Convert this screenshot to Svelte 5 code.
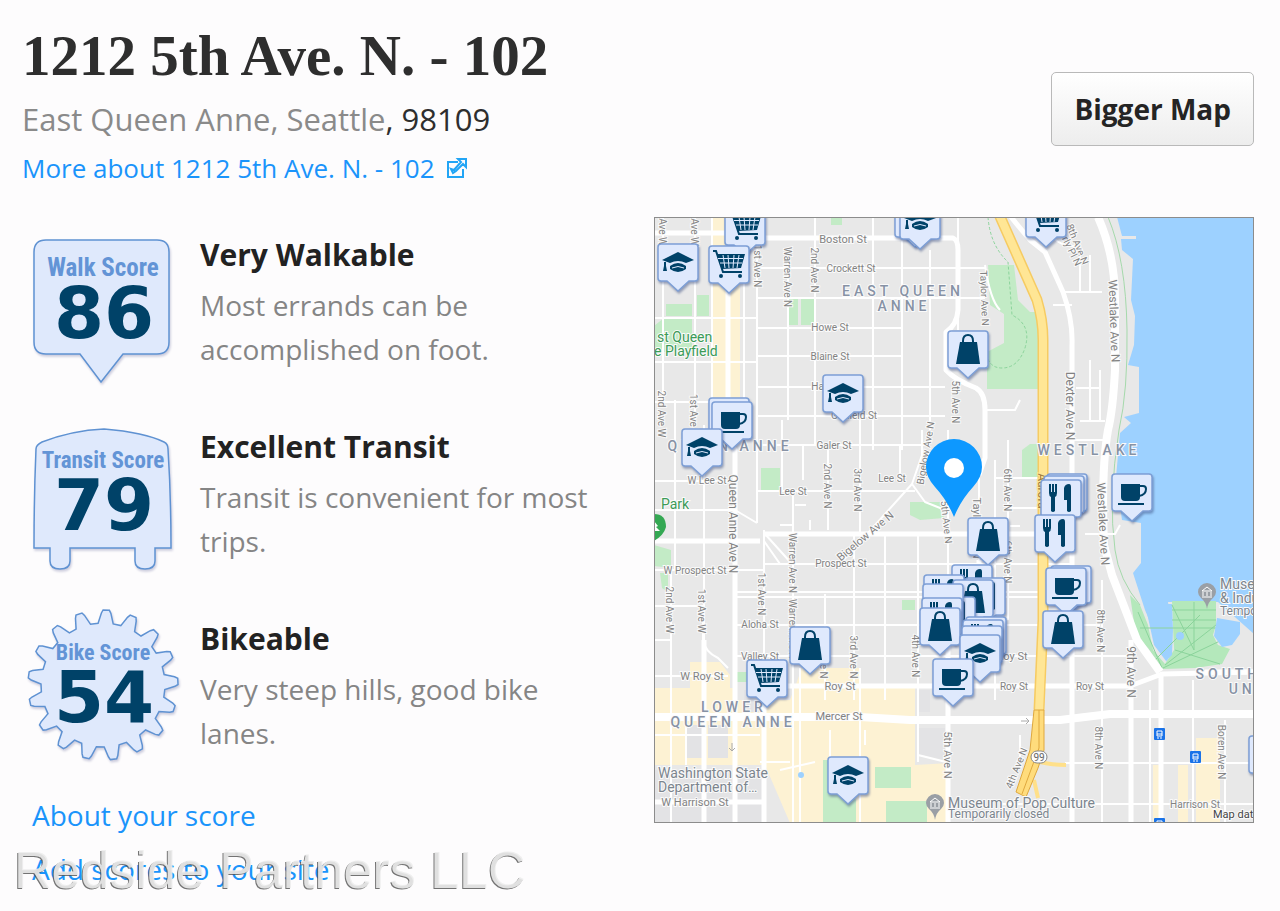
<script lang="ts">
	type Kind = 'grad' | 'cart' | 'bag' | 'cup' | 'food' | 'none';
	type Label = [text: string, x: number, y: number, size?: number, angle?: number];

	// back to front, x is the tip of the pin and y the top of its box
	const places: [Kind, number, number][] = [
		['cart', 745, 208],
		['cart', 729, 246],
		['grad', 678, 244],
		['grad', 915, 200],
		['grad', 920, 202],
		['cart', 1046, 200],
		['bag', 968, 331],
		['grad', 843, 375],
		['none', 729, 398],
		['cup', 732, 402],
		['grad', 702, 429],
		['cup', 1132, 474],
		['none', 1067, 474],
		['food', 1064, 476],
		['food', 1061, 480],
		['food', 1055, 515],
		['bag', 988, 518],
		['cup', 1071, 566],
		['cup', 1066, 568],
		['bag', 1063, 611],
		['food', 972, 565],
		['food', 944, 575],
		['food', 985, 578],
		['bag', 973, 580],
		['food', 955, 597],
		['none', 943, 584],
		['food', 942, 598],
		['bag', 940, 608],
		['food', 986, 617],
		['food', 983, 620],
		['none', 982, 626],
		['grad', 980, 635],
		['cup', 953, 659],
		['bag', 810, 627],
		['cart', 767, 660],
		['grad', 848, 757],
		['none', 1269, 736]
	];

	const streets: Label[] = [
		['Boston St', 843, 243, 11],
		['Crockett St', 851, 272, 10],
		['Howe St', 830, 331, 10],
		['Blaine St', 830, 360, 10],
		['Hayes St', 831, 390, 10],
		['Garfield St', 854, 419, 10],
		['Galer St', 834, 449, 10],
		['W Lee St', 707, 484, 10],
		['Lee St', 793, 495, 10],
		['Lee St', 892, 482, 10],
		['W Prospect St', 695, 574, 10],
		['Prospect St', 841, 567, 10],
		['Aloha St', 760, 628, 10],
		['Valley St', 760, 660, 10],
		['W Roy St', 702, 680, 11],
		['Roy St', 840, 690, 11],
		['Roy St', 1012, 660, 11],
		['Roy St', 1014, 690, 10],
		['Roy St', 1090, 690, 10],
		['Mercer St', 839, 720, 11],
		['W Harrison St', 695, 806, 11],
		['Harrison St', 1195, 808, 10],
		['Ave W', 663, 232, 10, 90],
		['Ave W', 695, 232, 10, 90],
		['1st Ave N', 758, 266, 10, 90],
		['Warren Ave N', 788, 277, 10, 90],
		['2nd Ave N', 815, 270, 10, 90],
		['2nd Ave W', 662, 414, 10, 90],
		['1st Ave W', 694, 416, 10, 90],
		['Queen Anne Ave N', 733, 524, 12, 90],
		['2nd Ave N', 828, 486, 10, 90],
		['3rd Ave N', 858, 490, 10, 90],
		['Warren Ave N', 793, 563, 10, 90],
		['Warren Ave N', 793, 629, 10, 90],
		['1st Ave N', 762, 594, 10, 90],
		['2nd Ave W', 670, 610, 10, 90],
		['1st Ave W', 702, 611, 10, 90],
		['2nd Ave N', 824, 656, 10, 90],
		['3rd Ave N', 854, 657, 10, 90],
		['4th Ave N', 916, 656, 10, 90],
		['Taylor Ave N', 985, 298, 10, 88],
		['5th Ave N', 956, 402, 10, 90],
		['Taylor Ave N', 977, 528, 11, 90],
		['5th Ave N', 947, 522, 10, 84],
		['6th Ave N', 1008, 490, 10, 90],
		['6th Ave N', 1008, 562, 10, 90],
		['5th Ave N', 948, 755, 11, 90],
		['8th Ave N', 1078, 244, 10, 68],
		['Waverly Pl N', 1067, 240, 10, 64],
		['Westlake Ave N', 1114, 321, 12, 88],
		['Dexter Ave N', 1070, 406, 12, 90],
		['Westlake Ave N', 1103, 524, 12, 87],
		['8th Ave N', 1101, 631, 10, 90],
		['9th Ave N', 1131, 672, 12, 90],
		['8th Ave N', 1099, 748, 10, 90],
		['Boren Ave N', 1222, 752, 10, 90],
		['4th Ave N', 1016, 768, 10, -68],
		['Bigelow Ave N', 865, 536, 11, -40],
		['Bigelow Ave N', 925, 453, 10, -80]
	];

	const areas: Label[] = [
		['EAST QUEEN', 903, 296],
		['ANNE', 904, 311],
		['QUEEN ANNE', 730, 451],
		['WESTLAKE', 1089, 455],
		['LOWER', 734, 712],
		['QUEEN ANNE', 733, 727],
		['SOUTH LAKE', 1257, 679],
		['UNION', 1260, 694]
	];

	const scores = [
		{ id: 'walk', name: 'Walk Score', value: 86, title: 'Very Walkable', text: 'Most errands can be accomplished on foot.' },
		{ id: 'transit', name: 'Transit Score', value: 79, title: 'Excellent Transit', text: 'Transit is convenient for most trips.' },
		{ id: 'bike', name: 'Bike Score', value: 54, title: 'Bikeable', text: 'Very steep hills, good bike lanes.' }
	];

	function gear(cx: number, cy: number, teeth: number) {
		const points: string[] = [];
		for (let i = 0; i < teeth; i++) {
			for (const [offset, r] of [[-7, 62], [-3.8, 72], [-2.4, 75], [2.4, 75], [3.8, 72], [7, 62]]) {
				const a = ((i * 360) / teeth + offset + 2.5 - 90) * (Math.PI / 180);
				points.push(`${(cx + r * Math.cos(a)).toFixed(1)},${(cy + r * Math.sin(a)).toFixed(1)}`);
			}
		}
		return `M${points.join('L')}Z`;
	}

	const shapes: Record<string, string> = {
		walk: 'M24 16H135Q147 16 147 28V118Q147 130 135 130H101L79 158L58 130H24Q12 130 12 118V28Q12 16 24 16Z',
		transit:
			'M82 13C106 15 130 20 142 26Q146 28 146 33Q149 80 149 132H133V145Q133 153 123 153Q113 153 113 145V132H48V145Q48 153 38 153Q28 153 28 145V132H12Q12 80 14 33Q14 29 20 26C38 19 60 14 82 13Z',
		bike: gear(81, 77, 17)
	};
</script>

{#snippet icon(kind: Kind)}
	{#if kind === 'grad'}
		<path d="M-16 16L0 8L16 16L8 19Q0 15-8 19Z" />
		<path d="M-8 22Q0 16 8 22V25Q0 31-8 25Z" />
		<path class="light" d="M-6 24Q0 21 6 24" />
		<path d="M-14 18H-12V22L-11 27H-15L-14 22Z" />
	{:else if kind === 'cart'}
		<path class="line" d="M-16 5H-13L-6 26H13" />
		<path d="M-12 8H16L12 22L-7 23Z" />
		<path class="light" d="M-11 12.500H14M-9 17H13M-6 9L-4 22M-1 9L0 22M5 9L4 22M10 9L8 22" />
		<circle cx="-8" cy="30" r="2" />
		<circle cx="11" cy="30" r="2" />
	{:else if kind === 'bag'}
		<path d="M-8 11H9L12 33H-12Z" />
		<path class="line" d="M-5 13V10Q-5 4 0 4T5 10V13" />
	{:else if kind === 'cup'}
		<path d="M-11 10H8V23Q8 27 4 27H-7Q-11 27-11 23Z" />
		<path class="line" d="M7 12H11Q14 12 14 15Q14 21 7 22M-14 30H12" />
	{:else if kind === 'food'}
		<path d="M-12 4H-10V12H-9V4H-7V12H-6V4H-4V13Q-4 16-6 17V31Q-8 33-10 31V17Q-12 16-12 13Z" />
		<path d="M3 8Q4 4 8 4Q10 4 10 7V31Q8 33 6 31V20H3Z" />
	{/if}
{/snippet}

<main>
	<header>
		<div>
			<h1>1212 5th Ave. N. - 102</h1>
			<p class="where">
				<a href="#neighborhood">East Queen Anne</a><span class="grey">,</span>
				<a href="#city">Seattle</a>, 98109
			</p>
			<a class="more" href="#more">
				More about 1212 5th Ave. N. - 102
				<svg viewBox="0 0 22 22" width="22" height="22" aria-hidden="true">
					<path d="M12 5H2V20H17V12" />
					<path d="M12 2H20V10L17 7L10 14L7 16L5 12L8 13L15 5Z" />
				</svg>
			</a>
		</div>
		<button type="button">Bigger Map</button>
	</header>

	<div class="columns">
		<section>
			{#each scores as score (score.id)}
				<article>
					<svg class="badge" viewBox="0 0 178 168" role="img" aria-label="{score.name} {score.value}">
						<path d={shapes[score.id]} />
						<text class="name {score.id}" x="81" y="52">{score.name}</text>
						<text class="value" x="82" y="114">{score.value}</text>
					</svg>
					<div class="text">
						<h2>{score.title}</h2>
						<p>{score.text}</p>
					</div>
				</article>
			{/each}
			<ul>
				<li><a href="#about">About your score</a></li>
				<li><a href="#add">Add scores to your site</a></li>
			</ul>
		</section>

		<svg class="map" viewBox="654 217 600 606" role="img" aria-label="Map of places near 1212 5th Ave. N.">
			<rect class="land" x="654" y="217" width="600" height="606" />

			<g class="sand">
				<path d="M713 217H740V400H713Z" />
				<path d="M654 688H735V700H790L802 668H860V686H915V765L950 763V823H790L765 765H654Z" />
				<path d="M690 662H720L730 675V700H690Z" />
				<path d="M1178 765H1188V823H1178ZM1196 738H1220V823H1196ZM1153 765H1163V823H1153Z" />
			</g>
			<g class="blocks">
				<path d="M686 725H702V758H686ZM708 725H728V758H708ZM744 690H764V712H744ZM654 770H766V823H654ZM918 690H930V712H918ZM918 728H945V760L918 754Z" />
			</g>
			<g class="green">
				<path d="M666 304H692V316H666ZM697 295H709V316H697ZM654 326L664 318H692V352H654Z" />
				<path d="M789 299H798V325H789ZM801 299H814V325H801ZM831 217H842V225H831Z" />
				<path d="M988 265H1014L1018 300L1030 312H1039V389H987V352L1004 343V314L990 305Z" />
				<path d="M761 468H780V490H761ZM654 545L671 550V568L654 566ZM660 573H668V592L662 588Z" />
				<path d="M1022 450L1030 444H1038V477H1022ZM910 502H940L944 518L920 520L910 515ZM902 600H915V610H902Z" />
				<path d="M823 760H830L856 800V823H823ZM875 767H911V788H875ZM886 801H927V823H886ZM735 672H747V682H735Z" />
			</g>

			<path class="water" d="M1117 217L1122 236H1136V239H1121L1122 250L1133 259L1131 300L1135 316L1134 345L1128 365L1139 367V413L1124 417L1131 423L1120 433L1116 477L1122 520L1141 523V563L1133 573L1145 610L1167 662L1172 632L1168 602H1218L1254 634V217Z" />
			<path class="park" d="M1130 595L1140 605L1148 625L1153 650L1165 664L1174 650L1172 601H1216V625L1213 635L1218 645L1230 649L1222 664L1195 668L1163 669L1148 648L1136 636Z" />
			<path class="water" d="M1145 604H1172L1173 630L1172 655L1166 661L1154 645Z" />
			<path class="trail" d="M1172 610H1216M1172 620H1216M1140 628H1216M1150 665L1200 615M1163 668L1222 640M1175 650L1220 664M1194 602V650L1172 605M1216 625L1165 665M1138 612Q1150 640 1162 668" />
			<path class="water" d="M1217 618L1240 622L1240 634L1232 645L1222 647L1214 636Z" />
			<circle class="water" cx="1180" cy="636" r="4" />
			<path class="trail thin" d="M1108 217Q1126 260 1127 330Q1128 390 1119 430Q1108 500 1115 550Q1119 580 1140 605" />
			<path class="trail dash" d="M988 217Q990 245 1008 262L1012 315Q1032 325 1025 348Q1018 368 1002 368Q990 368 987 356" />

			<g class="roads">
				<path d="M654 318H757M654 362H757M654 402H714M654 481H735M654 510H735L757 523M654 570H765M654 606H703V640Q705 652 718 658L728 668M654 640H670M654 676H728" />
				<path d="M663 217V400M675 400V570M671 570V823M695 217V425M704 425V823M712 217V440M744 217V440" />
				<path d="M757 268H985M757 298H985M757 328H902M757 356H902M757 387H945M757 416H945M757 445H930M757 491H915M765 564H1040M735 592H1040M735 597H1040M735 625H1100M735 656H1130" />
				<path d="M757 217V523M788 250V420M782 420V490M815 217V445M803 445V480M793 490V823M828 448V530M873 217V450M902 217V450M930 250V430M860 410V535M900 445V480M764 530V823M825 594V700M854 534V700M885 534V700M918 534V762M948 430V600M995 460V700M1008 440V620M979 470V600" />
				<path d="M764 541L780 564M765 534L792 564M780 525H792M795 505H806M810 520V530M840 564L912 484L922 455V430M912 484L925 502L945 510M958 217V330M985 265Q990 300 1000 310M985 410H1015L1020 400M995 478H1040M1010 508H1040M1010 526H1020" />
				<path d="M1072 305H1053M1045 228Q1060 250 1078 245M1063 292H1102M1080 245V292M1090 255V292M1090 360V420M1100 370V420M1076 388H1100M1080 421H1105M1085 534H1115L1120 525" />
				<path d="M1040 564H1072M1102 580V823M1132 690V823M1193 680V823M1225 720V823M1065 763H1254M1000 804H1254M1040 656H1072V625M1020 735V760M760 762H790M830 730V762M865 730V745M815 762L780 770" />
				<path d="M654 735H760M686 720V765M918 720L918 755L950 763M800 668V823M860 668V823M1150 690V823M1072 440H1105" />
			</g>
			<g class="roads mid">
				<path d="M654 233H735M654 541H760M764 534H1040M765 686H1130L1162 674L1254 672M654 802H766M728 217V440L735 450V823M704 640V823M1072 620V823M1161 675V823M1131 640V823" />
				<path d="M735 238H953Q958 240 958 250V310Q957 325 946 332V370Q955 380 976 388Q985 393 985 410V458L979 475" />
				<path d="M1011 217L1030 240L1045 252L1063 292Q1073 320 1072 345V470V620M948 600V823M979 560V600M764 700V823M1205 672H1254M1088 217" />
			</g>
			<path class="roads big" d="M654 717H860L910 720H1060L1110 714H1254M1098 217Q1115 255 1115 300V370Q1113 410 1108 430Q1101 470 1104 545L1112 575L1137 640L1160 672" />

			<g class="highway">
				<path class="edge" d="M998 212L1037 300Q1043 320 1043 340V620L1039 710" />
				<path d="M998 212L1037 300Q1043 320 1043 340V620L1039 712" />
			</g>
			<path class="ramp spur" d="M1040 762Q1052 765 1066 765M1034 780L1038 798" />
			<path class="ramp" d="M1034 710H1044L1044 750L1038 768L1026 797L1016 792L1030 750Z" />
			<path class="ramp open" d="M1039 710V748L1022 794" />

			<g class="streets">
				{#each streets as [text, x, y, size, angle]}
					<text font-size={size} transform="translate({x} {y}) rotate({angle ?? 0})" dy={angle ? 4 : 0}>{text}</text>
				{/each}
				<text class="aurora" font-size="12" transform="translate(1042 491) rotate(90)" dy="4">Aurora</text>
			</g>
			<g class="areas">
				{#each areas as [text, x, y]}
					<text {x} {y}>{text}</text>
				{/each}
			</g>
			<g class="parks">
				<text x="657" y="342">st Queen</text>
				<text x="654" y="356">e Playfield</text>
				<text x="661" y="509">Park</text>
			</g>
			<g class="spots">
				<text x="658" y="778">Washington State</text>
				<text x="658" y="792">Department of…</text>
				<text x="948" y="808">Museum of Pop Culture</text>
				<text class="sub" x="948" y="818">Temporarily closed</text>
				<text x="1220" y="589">Museum</text>
				<text x="1220" y="603">&amp; Industry</text>
				<text class="sub" x="1220" y="615">Temporarily</text>
				<text class="credit" x="1213" y="818">Map data</text>
			</g>

			<path class="tree" d="M654 514Q666 514 666 527Q664 535 654 541Z" />
			<path class="leaf" d="M654 521L658 526L656 527L660 531H654Z" />
			{#each [[935, 803], [1207, 592]] as [x, y]}
				<g class="museum" transform="translate({x} {y})">
					<path d="M0 17Q-1 10-6 6Q-9 3-9 0A9 9 0 0 1 9 0Q9 3 6 6Q1 10 0 17Z" />
					<path class="temple" d="M-5-1L0-5L5-1ZM-4 0V4M0 0V4M4 0V4M-5 5H5" />
				</g>
			{/each}
			{#each [[1159, 734], [1195, 757], [1159, 824]] as [x, y]}
				<g class="stop" transform="translate({x} {y})">
					<rect x="-5" y="-6" width="11" height="12" rx="1" />
					<path d="M-2-3H3V2H-2ZM-2 0H3M-2 4H0M1 4H3" />
				</g>
			{/each}
			<g class="shield">
				<rect x="1031" y="751" width="16" height="12" rx="6" />
				<text x="1039" y="761">99</text>
			</g>
			<path class="arrow" d="M1021 721H1029M1026 718L1029 721L1026 724M732 743V751M729 748L732 751L735 748" />
			<circle class="water" cx="801" cy="775" r="3" />

			{#each places as [kind, x, y]}
				<g class="place" transform="translate({x} {y})">
					<path class="box" d="M-17 0H17Q20 0 20 3V34Q20 37 17 37H11L0 47L-11 37H-17Q-20 37-20 34V3Q-20 0-17 0Z" />
					{@render icon(kind)}
				</g>
			{/each}

			<path class="home" d="M954 517Q947 500 935 487Q926 477 926 467A28 28 0 0 1 982 467Q982 477 973 487Q961 500 954 517Z" />
			<circle class="dot" cx="954" cy="468" r="10" />
			<rect class="frame" x="654" y="217" width="600" height="606" />
		</svg>
	</div>

	<div class="watermark">Redside Partners LLC</div>
</main>

<style>
	:global(body) {
		margin: 0;
		background: #fdfcfd;
	}
	main {
		position: relative;
		padding: 24px 26px 0 22px;
		font-family: 'Open Sans', 'Noto Sans', sans-serif;
		color: #2e2e2e;
	}
	a {
		color: #1a94fb;
		text-decoration: none;
	}
	h1,
	h2,
	p,
	ul {
		margin: 0;
		padding: 0;
	}
	header {
		display: flex;
		justify-content: space-between;
		align-items: flex-start;
		min-height: 193px;
	}
	h1 {
		font: bold 57px/64px 'Liberation Serif', serif;
	}
	.where {
		margin-top: 6px;
		font-size: 31px;
		line-height: 50px;
	}
	.where a,
	.grey {
		color: #8a8a8a;
	}
	.more {
		display: flex;
		align-items: center;
		gap: 11px;
		font-size: 26px;
		line-height: 48px;
	}
	.more svg path {
		fill: none;
		stroke: #22a5f5;
		stroke-width: 2;
	}
	button {
		margin-top: 48px;
		padding: 0 22px;
		height: 74px;
		border: 1px solid #b9b9b9;
		border-radius: 5px;
		background: linear-gradient(#fff, #ededed);
		color: #242424;
		font: bold 28px 'Open Sans', sans-serif;
	}
	.columns {
		display: grid;
		grid-template-columns: 604fr 600fr;
		gap: 28px;
		align-items: start;
	}
	section {
		padding-top: 7px;
	}
	article {
		display: flex;
		min-height: 168px;
		margin-bottom: 24px;
	}
	article:last-of-type {
		margin-bottom: 12px;
	}
	.badge {
		flex: none;
		width: 178px;
		height: 168px;
	}
	.badge path {
		fill: #dfe9fc;
		stroke: #5f92d2;
		stroke-width: 1.500;
		filter: drop-shadow(1px 2px 1px #ccd);
	}
	.badge text {
		text-anchor: middle;
		font-weight: bold;
	}
	.name {
		fill: #6394d6;
		font-family: 'Liberation Sans Narrow', 'Roboto Condensed', Roboto, sans-serif;
	}
	.walk {
		font-size: 25px;
	}
	.transit {
		font-size: 23px;
	}
	.bike {
		font-size: 22px;
	}
	.value {
		fill: #004268;
		font-family: 'DejaVu Sans', sans-serif;
		font-size: 72px;
	}
	.text {
		padding: 3px 30px 0 0;
	}
	h2 {
		font-size: 30px;
		font-weight: bold;
		line-height: 56px;
		color: #222;
	}
	article p {
		color: #858585;
		font-size: 28px;
		line-height: 44px;
	}
	ul {
		padding-left: 10px;
		list-style: none;
		font-size: 28px;
		line-height: 54px;
	}
	.watermark {
		position: absolute;
		left: 14px;
		bottom: -4px;
		font: 52px/60px 'Liberation Sans', sans-serif;
		color: rgba(236, 236, 236, 0.9);
		text-shadow: -1px 1px 0 rgba(80, 80, 80, 0.8);
		white-space: nowrap;
		pointer-events: none;
	}

	.map {
		display: block;
		width: 100%;
		font-family: Roboto, sans-serif;
	}
	.land {
		fill: #e8e8e8;
	}
	.blocks {
		fill: #e3e3e5;
	}
	.sand {
		fill: #fdf2d3;
	}
	.green {
		fill: #c3ebc6;
	}
	.park {
		fill: #b4e8bb;
	}
	.water {
		fill: #9dd1ff;
	}
	.trail {
		fill: none;
		stroke: #8bd49b;
	}
	.thin {
		stroke: #a5d9ab;
	}
	.dash {
		stroke-dasharray: 3 2;
	}
	.roads {
		fill: none;
		stroke: #fff;
		stroke-width: 2;
		stroke-linejoin: round;
	}
	.mid {
		stroke-width: 5;
	}
	.big {
		stroke-width: 8;
	}
	.highway path {
		fill: none;
		stroke: #ffe695;
		stroke-width: 8;
	}
	.highway .edge {
		stroke: #f6cb62;
		stroke-width: 11;
	}
	.ramp {
		fill: #ffdc7c;
		stroke: #dfa83e;
	}
	.open {
		fill: none;
	}
	.spur {
		fill: none;
		stroke: #ffe08a;
		stroke-width: 4;
	}
	.map text {
		paint-order: stroke;
		stroke: #fafafa;
		stroke-width: 2;
	}
	.streets text {
		text-anchor: middle;
		fill: #828282;
	}
	.streets .aurora {
		fill: #a07a3c;
		stroke: #ffe695;
	}
	.areas text {
		text-anchor: middle;
		fill: #8792a5;
		font-size: 14px;
		font-weight: 500;
		letter-spacing: 4px;
	}
	.parks text {
		fill: #3c9b57;
		font-size: 14px;
	}
	.spots text {
		fill: #7c858e;
		font-size: 14px;
	}
	.spots .sub {
		font-size: 12px;
	}
	.spots .credit {
		fill: #444;
		font-size: 11px;
	}
	.tree {
		fill: #34a853;
	}
	.leaf {
		fill: #fff;
	}
	.museum {
		fill: #9a9fa5;
	}
	.temple {
		fill: none;
		stroke: #fff;
	}
	.stop rect {
		fill: #1a73e8;
	}
	.stop path {
		fill: none;
		stroke: #fff;
	}
	.shield rect {
		fill: #fff;
		stroke: #888;
	}
	.shield text {
		text-anchor: middle;
		fill: #666;
		font-size: 10px;
	}
	.arrow {
		fill: none;
		stroke: #aaa;
	}
	.place {
		fill: #004268;
	}
	.box {
		fill: #dfe9fd;
		stroke: #7d9fd6;
		stroke-width: 1.500;
		filter: drop-shadow(1px 2px 1px rgba(60, 80, 130, 0.5));
	}
	.line {
		fill: none;
		stroke: #004268;
		stroke-width: 2;
	}
	.light {
		fill: none;
		stroke: #dfe9fd;
	}
	.home {
		fill: #0d98ff;
	}
	.dot {
		fill: #fff;
	}
	.frame {
		fill: none;
		stroke: #8c8c8c;
		stroke-width: 2;
	}
</style>
